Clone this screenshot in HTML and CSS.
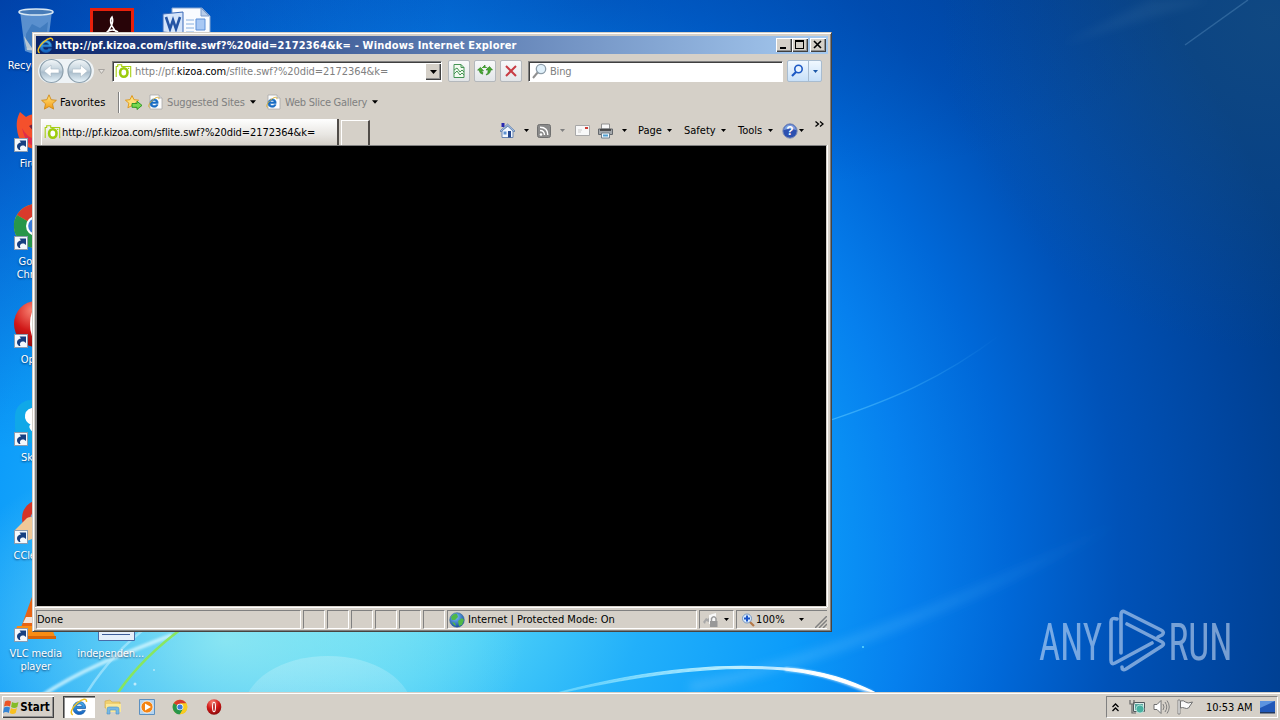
FILE: index.html
```html
<!DOCTYPE html>
<html lang="en">
<head>
    <meta charset="UTF-8">
    <meta name="viewport" content="width=device-width, initial-scale=1.0">
    <title>Desktop</title>
    <link rel="stylesheet" href="styles.css">
</head>
<body>
    <!-- Shared icons -->
    <svg class="defs" width="0" height="0">
        <defs>
            <linearGradient id="gold" x1="0" y1="0" x2="0" y2="1"><stop offset="0" stop-color="#ffe680"/><stop offset="1" stop-color="#f59a10"/></linearGradient>
            <linearGradient id="blueE" x1="0" y1="0" x2="0" y2="1"><stop offset="0" stop-color="#4cb4f0"/><stop offset="1" stop-color="#0f5fc0"/></linearGradient>
            <linearGradient id="orb" x1="0" y1="0" x2="0" y2="1"><stop offset="0" stop-color="#f4f8fa"/><stop offset=".45" stop-color="#c3d2dc"/><stop offset=".55" stop-color="#a9bccb"/><stop offset="1" stop-color="#eaf6fc"/></linearGradient>
            <radialGradient id="globe" cx=".4" cy=".3" r=".8"><stop offset="0" stop-color="#7cc4f8"/><stop offset="1" stop-color="#0a3c98"/></radialGradient>
            <radialGradient id="red" cx=".4" cy=".2" r=".9"><stop offset="0" stop-color="#f88070"/><stop offset=".5" stop-color="#d01818"/><stop offset="1" stop-color="#7c0808"/></radialGradient>
        </defs>
        <symbol id="shortcut" viewBox="0 0 14 14">
            <rect x=".5" y=".5" width="13" height="13" fill="#f4f8fc" stroke="#8c9cb0"/>
            <path d="M5 12C1.500 9 3 5 7 4.500L5.500 2.500h6.500v6.500L10 7.500C7 7 5 9 6.500 12z" fill="#173f80"/>
        </symbol>
        <symbol id="ie" viewBox="0 0 16 16">
            <path d="M13.800 9.300H5.600c.2 2 1.300 2.900 2.900 2.900 1.100 0 1.800-.4 2.300-1.200h2.800c-.8 2.400-2.600 3.600-5.200 3.600-3.500 0-5.700-2.300-5.700-5.600s2.300-5.700 5.700-5.700c3.600 0 5.600 2.400 5.400 6zM5.700 7.400h5.200c-.2-1.300-1.100-2.100-2.500-2.100s-2.400.8-2.700 2.100z" fill="url(#blueE)" stroke="#1b5ea8" stroke-width=".7"/>
            <path d="M2.500 15C-.5 13.500 1.800 8.500 6.500 4.500S15 0 14.700 3.500" fill="none" stroke="#f0c020" stroke-width="1.300"/>
        </symbol>
        <symbol id="iepage" viewBox="0 0 15 16">
            <path d="M2 1h9l3 3v11H2z" fill="#fdfdfd" stroke="#a8a8a8" stroke-width=".8"/>
            <path d="M11 1v3h3" fill="#ddd" stroke="#a8a8a8" stroke-width=".8"/>
            <g transform="translate(0 2.500) scale(.74)"><path d="M13.800 9.300H5.600c.2 2 1.300 2.900 2.900 2.900 1.100 0 1.800-.4 2.300-1.200h2.800c-.8 2.400-2.600 3.600-5.200 3.600-3.500 0-5.700-2.300-5.700-5.600s2.300-5.700 5.700-5.700c3.600 0 5.600 2.400 5.400 6zM5.700 7.400h5.200c-.2-1.300-1.100-2.100-2.500-2.100s-2.400.8-2.700 2.100z" fill="#186cc4" stroke="#186cc4" stroke-width=".8"/><path d="M2 15C-.5 13 2 8.500 6.500 4.500S15 0 14.700 3.500" fill="none" stroke="#dcb030" stroke-width="1.300"/></g>
        </symbol>
        <symbol id="kizoa" viewBox="0 0 16 16">
            <path d="M.7 14V3.500h1.500V1.700h4v1.800h9v10.700" fill="none" stroke="#a6cf12" stroke-width="1.100"/>
            <ellipse cx="8.300" cy="9.500" rx="3.700" ry="4.300" fill="#fff" stroke="#9ccc0c" stroke-width="2.600"/>
            <circle cx="13.100" cy="5.400" r=".7" fill="#a6cf12"/>
        </symbol>
        <symbol id="caret" viewBox="0 0 5 3"><path d="M0 0h5L2.500 3z" fill="currentColor"/></symbol>
        <symbol id="star" viewBox="0 0 16 16">
            <path d="M8 .8l2.200 4.900 5.200.6-3.900 3.500 1.100 5.300L8 12.500l-4.600 2.600 1.100-5.300L.6 6.300l5.200-.6z" fill="url(#gold)" stroke="#d08a18" stroke-width=".9"/>
        </symbol>
        <symbol id="chrome" viewBox="0 0 48 48">
            <circle cx="24" cy="24" r="22" fill="#e8c020"/>
            <path d="M24 24L4.900 13A22 22 0 0 1 43 13z" fill="#d83a2c"/>
            <path d="M24 24L4.900 13A22 22 0 0 0 24 46l9.500-17z" fill="#28964a"/>
            <path d="M24 13h19a22 22 0 0 1-19 33l9.500-17z" fill="#f8cc20"/>
            <circle cx="24" cy="24" r="10" fill="#fff"/><circle cx="24" cy="24" r="7.800" fill="#3a7cd8"/>
        </symbol>
        <symbol id="opera" viewBox="0 0 48 48">
            <ellipse cx="24" cy="24" rx="22" ry="23" fill="url(#red)"/>
            <ellipse cx="24" cy="24" rx="6" ry="16" fill="#fff"/>
            <ellipse cx="24" cy="24" rx="2.500" ry="13" fill="#b01414"/>
        </symbol>
    </svg>

    <main class="desktop">
        <svg class="wallpaper" viewBox="0 0 1280 720">
            <defs>
                <linearGradient id="fade" x1="0" y1="0" x2="0" y2="1"><stop offset="0" stop-color="#fff" stop-opacity=".22"/><stop offset="1" stop-color="#fff" stop-opacity="0"/></linearGradient>
                <linearGradient id="fade2" x1="0" x2="1"><stop offset="0" stop-color="#60c0ff" stop-opacity=".4"/><stop offset="1" stop-color="#60c0ff" stop-opacity="0"/></linearGradient>
                <linearGradient id="swoosh" x1="0" x2="1"><stop offset="0" stop-color="#7fe0ff" stop-opacity=".5"/><stop offset=".55" stop-color="#bff0ff"/><stop offset=".8" stop-color="#fff"/></linearGradient>
                <linearGradient id="line" x1="0" x2="1"><stop offset="0" stop-color="#5cc8ff" stop-opacity=".6"/><stop offset="1" stop-color="#5cc8ff" stop-opacity="0"/></linearGradient>
                <filter id="soft"><feGaussianBlur stdDeviation="1.200"/></filter>
                <filter id="softer"><feGaussianBlur stdDeviation="4"/></filter>
            </defs>
            <ellipse cx="328" cy="710" rx="84" ry="54" fill="url(#fade)"/>
            <path d="M40 697C80 670 120 655 172 635" stroke="#d8f8ff" stroke-width="4" fill="none" opacity=".75" filter="url(#soft)"/>
            <path d="M86 694C103 667 122 645 150 625" stroke="#b8ecff" stroke-width="2.500" fill="none" opacity=".6"/>
            <path d="M117 694C132 672 155 648 184 627" stroke="#8ce850" stroke-width="2.600" fill="none" opacity=".9"/>
            <circle cx="135" cy="684" r="1.500" fill="#fff" opacity=".6"/><circle cx="154" cy="670" r="1" fill="#fff" opacity=".5"/>
            <path d="M560 692C660 666 730 664 785 668C825 671 850 680 876 693C846 684 825 674 785 670C730 665 660 670 560 693z" fill="url(#swoosh)" stroke="url(#swoosh)" stroke-width="1.200"/>
            <path d="M785 669C825 673 846 682 872 693" stroke="#fff" stroke-width="4" fill="none" opacity=".7" filter="url(#soft)"/>
            <path d="M690 692C800 674 980 605 1110 530L1120 520C980 585 830 655 690 682z" fill="url(#fade2)" filter="url(#softer)"/>
            <path d="M831 420C890 400 940 380 1000 335" stroke="url(#line)" stroke-width="1.300" fill="none"/>
            <path d="M1185 45L1248 0" stroke="#8cc0e8" stroke-width="1.500" fill="none" opacity=".25"/>
            <path d="M1060 45L1150 0h60z" fill="#6c9cc0" opacity=".1" filter="url(#softer)"/>
            <circle cx="863" cy="647" r="1" fill="#60d8ff"/>
        </svg>

        <div class="icons">
            <div class="icon r1">
                <svg width="48" height="48" viewBox="0 0 48 48"><path d="M8 5l5 40q11 5 22 0l5-40z" fill="#78a8d8" opacity=".75"/><path d="M14 28l6-10 8 4 8-6-3 26H14z" fill="#2868b0" opacity=".5"/><path d="M12 30l8 12 12-4-2 7-15-1z" fill="#e8e4d8" opacity=".7"/><ellipse cx="24" cy="6" rx="17" ry="3" fill="#487cb8" stroke="#d8e8f4" stroke-width="1.500"/></svg>
                <span>Recycle Bin</span>
            </div>
            <div class="icon r2">
                <svg width="48" height="48" viewBox="0 0 48 48"><path d="M5 25C4 17 6 12 8 8l6 5C20 8 40 8 43 22c3 14-9 24-20 23S6 36 5 25z" fill="#f4502c"/><path d="M17 22l6-3v10z" fill="#702040"/><path d="M10 24q6 12 16 10v9q-12 0-16-19z" fill="#e02c48"/></svg>
                <svg class="arrow" width="14" height="14"><use href="#shortcut"/></svg>
                <span>Firefox</span>
            </div>
            <div class="icon r3">
                <svg width="48" height="48"><use href="#chrome"/></svg>
                <svg class="arrow" width="14" height="14"><use href="#shortcut"/></svg>
                <span>Google<br>Chrome</span>
            </div>
            <div class="icon r4">
                <svg width="48" height="48"><use href="#opera"/></svg>
                <svg class="arrow" width="14" height="14"><use href="#shortcut"/></svg>
                <span>Opera</span>
            </div>
            <div class="icon r5">
                <svg width="48" height="48" viewBox="0 0 48 48"><rect x="3" y="2" width="42" height="43" rx="16" fill="#10a8e8"/><path d="M24 13c-9 0-10 8-3 11 7 2 10 3 9 6-2 3-7 2-9-1" fill="none" stroke="#fff" stroke-width="7" stroke-linecap="round"/></svg>
                <svg class="arrow" width="14" height="14"><use href="#shortcut"/></svg>
                <span>Skype</span>
            </div>
            <div class="icon r6">
                <svg width="48" height="48" viewBox="0 0 48 48"><circle cx="28" cy="22" r="18" fill="#d43428"/><circle cx="29" cy="24" r="11" fill="#78a8d0"/><path d="M3 34l12-12q6-3 8 3l-3 18q-9 5-17-4z" fill="#f0c898"/></svg>
                <svg class="arrow" width="14" height="14"><use href="#shortcut"/></svg>
                <span>CCleaner</span>
            </div>
            <div class="icon r7">
                <svg width="48" height="48" viewBox="0 0 48 48"><path d="M20 3h8l13 36H7z" fill="#e86414"/><path d="M14 23h20l2 6H11z" fill="#f4e4d8"/><path d="M5 32h34l5 13H2z" fill="#f88c14"/><path d="M2 42h42v3H2z" fill="#d86408"/></svg>
                <svg class="arrow" width="14" height="14"><use href="#shortcut"/></svg>
                <span>VLC media<br>player</span>
            </div>
            <div class="icon r1 c2">
                <svg width="48" height="48" viewBox="0 0 48 48"><path d="M4.500 3.500h41v42h-41z" fill="#280408" stroke="#e8200c" stroke-width="3"/><path d="M18 28c6-5 9-12 7-17-4 4 1 13 7 17M20 26q5-4 11 0" fill="none" stroke="#fff" stroke-width="1.600"/></svg>
            </div>
            <div class="icon r7 c2">
                <svg width="48" height="48" viewBox="0 0 48 48"><path d="M11.500 2h36v44.500h-36z" fill="#e4eefa" stroke="#486ca8"/><path d="M15 40.500h28" stroke="#3c5c98" stroke-width="1"/></svg>
                <span>independen...</span>
            </div>
            <div class="icon r1 c3">
                <svg width="48" height="48" viewBox="0 0 48 48"><path d="M11 2h30l8 8v36H11z" fill="#f8fbff" stroke="#84a4d0"/><path d="M40 2v8h8z" fill="#b8cce8" stroke="#7c9ccc"/><path d="M25 14h8M25 18h8M25 22h8M25 26h8" stroke="#88b0e0"/><path d="M35 13h9v11h-9z" fill="#a8c8f4" stroke="#5c90d8"/><path d="M2 8l20-2v22L2 26z" fill="#d4e4fa" stroke="#3868b8"/><path d="M5 11l4 12 3-9 3 9 4-12" fill="none" stroke="#2454a4" stroke-width="2.600"/></svg>
            </div>
        </div>

        <svg class="brand" width="200" height="80" viewBox="0 0 200 80">
            <g class="brand-text">
                <text x="2" y="54.500" textLength="63" lengthAdjust="spacingAndGlyphs">ANY</text>
                <text x="131.500" y="54.500" textLength="64" lengthAdjust="spacingAndGlyphs">RUN</text>
            </g>
            <path class="brand-mark" d="M80 14q-6-2-6 3v38q0 5 4 3l37-20M84 48V10q0-5 4-3l36 18q4 2 1 5l-4 2M90 19l35 18q3 2 0 4L89 64q-4 2-4-2"/>
        </svg>

        <section class="window">
            <header class="titlebar">
                <svg width="17" height="17"><use href="#ie"/></svg>
                <h1>http://pf.kizoa.com/sflite.swf?%20did=2172364&amp;k= - Windows Internet Explorer</h1>
                <div class="controls">
                    <button><svg width="12" height="10"><path d="M2 7h6v2H2z"/></svg></button>
                    <button><svg width="12" height="10"><path d="M1 0h9v9H1zM2 2v6h7V2z" fill-rule="evenodd"/></svg></button>
                    <button class="close"><svg width="12" height="10"><path d="M2 1l7 7M9 1L2 8" stroke="#000" stroke-width="1.600"/></svg></button>
                </div>
            </header>

            <nav class="navbar">
                <svg class="orbs" width="72" height="28" viewBox="0 0 72 28">
                    <rect x="1" y="2" width="56" height="24" rx="12" fill="#eef3f6"/>
                    <circle cx="14.500" cy="14" r="11.500" fill="url(#orb)" stroke="#8c9fac" stroke-width="1.200"/>
                    <circle cx="42.500" cy="14" r="11.500" fill="url(#orb)" stroke="#8c9fac" stroke-width="1.200"/>
                    <path d="M7 14l7-6v4h8v4h-8v4zM50.500 14l-7-6v4h-8v4h8v4z" fill="#fff" stroke="#a9bac6" stroke-width=".6"/>
                    <path d="M61.500 12.500h6l-3 4z" fill="#e4e2de" stroke="#a8a4a0"/>
                </svg>
                <div class="field address">
                    <svg width="17" height="16"><use href="#kizoa"/></svg>
                    <span class="url">http://pf.<b>kizoa.com</b>/sflite.swf?%20did=2172364&amp;k=</span>
                    <button class="drop"><svg width="7" height="4"><path d="M0 0h7L3.500 4z"/></svg></button>
                </div>
                <button class="tool compat"><svg width="14" height="16" viewBox="0 0 14 16"><path d="M2 1.500h7l3 3V14.500H2z" fill="#f2faf0" stroke="#449454"/><path d="M9 1.500v3h3M2 7l3-2 3 4 2-2 2 2M2 11l3-3 3 4 2-2 2 2" fill="none" stroke="#449454"/></svg></button>
                <button class="tool"><svg width="16" height="16" viewBox="0 0 16 16"><path d="M3 4.500L.5 7.500h1.800q.2 3 3.700 3.500V9q-1.500-.5-1.500-1.500H6.500z" fill="#48a830" stroke="#28801c" stroke-width=".6" transform="rotate(8 4 8)"/><path d="M5 5l3-3v2l2.500 1M15.500 7l-3-3.500L9 7h2.200q.3 2.500-2.200 5 4.500-1 4.500-5z" fill="#48a830" stroke="#28801c" stroke-width=".6"/></svg></button>
                <button class="tool stop"><svg width="14" height="14" viewBox="0 0 14 14"><path d="M2 2l10 10M12 2L2 12" stroke="#c83c44" stroke-width="2"/></svg></button>
                <div class="field search">
                    <svg width="17" height="17" viewBox="0 0 17 17"><path d="M2 15l5-6" stroke="#909090" stroke-width="2"/><circle cx="10" cy="6" r="4.700" fill="#e0f0fa" stroke="#8c9ca8" stroke-width="1.300"/></svg>
                    <span>Bing</span>
                </div>
                <button class="find">
                    <svg width="20" height="20" viewBox="0 0 20 20"><path d="M4 15l4-4" stroke="#1c58c4" stroke-width="2.200"/><circle cx="10.500" cy="8" r="3.700" fill="#e8f4ff" stroke="#1c58c4" stroke-width="1.600"/></svg>
                    <i><svg width="5" height="3"><use href="#caret"/></svg></i>
                </button>
            </nav>

            <div class="favbar">
                <svg width="16" height="16"><use href="#star"/></svg>
                <span class="fav-title">Favorites</span>
                <i class="sep"></i>
                <svg class="add" width="18" height="17" viewBox="0 0 18 17"><path d="M7 1.500l2 4.200 4.600.5-3.500 3 1 4.600L7 11.500l-4.100 2.300 1-4.600-3.500-3 4.600-.5z" fill="#ffe078" stroke="#e09a20"/><path d="M7 9.500h5V7.300l5 4.100-5 4.100v-2.200H7z" fill="#78d850" stroke="#259420" stroke-width=".9"/></svg>
                <svg class="page-ico" width="15" height="16"><use href="#iepage"/></svg>
                <span class="sites">Suggested Sites</span>
                <svg class="car" width="6" height="4"><use href="#caret"/></svg>
                <svg class="page-ico second" width="15" height="16"><use href="#iepage"/></svg>
                <span class="slice">Web Slice Gallery</span>
                <svg class="car" width="6" height="4"><use href="#caret"/></svg>
            </div>

            <div class="tabbar">
                <div class="tab">
                    <svg width="17" height="16"><use href="#kizoa"/></svg>
                    <span class="url">http://pf.kizoa.com/sflite.swf?%20did=2172364&amp;k=</span>
                </div>
                <div class="newtab"></div>
                <div class="commands">
                    <svg width="17" height="17" viewBox="0 0 17 17"><path d="M2.500 1h3v4h-3z" fill="#2828b0"/><path d="M3 8.500v7h11v-7L9 4z" fill="#f2f8ff" stroke="#6884b0"/><path d="M1 9l7.500-7L16 9l-1 1-6.500-6L2 10z" fill="#a8c4e8" stroke="#5474a4" stroke-width=".7"/><path d="M9 9h3v6.500H9z" fill="#244890"/><path d="M4.500 9.500h3v3h-3z" fill="#5c90d0"/></svg>
                    <svg class="car c1" width="5" height="3"><use href="#caret"/></svg>
                    <svg class="rss" width="14" height="14" viewBox="0 0 14 14"><rect x=".5" y=".5" width="13" height="13" rx="2" fill="#8a8a8a" stroke="#707070"/><circle cx="4" cy="10.500" r="1.300" fill="#fff"/><path d="M3 6.500Q7.500 6.500 7.500 11M3 3.200Q10.800 3.200 10.800 11" fill="none" stroke="#fff" stroke-width="1.400"/></svg>
                    <svg class="car c2 dim" width="5" height="3"><use href="#caret"/></svg>
                    <svg class="mail" width="15" height="11" viewBox="0 0 15 11"><path d="M.5.5h14v10H.5z" fill="#f8f8f8" stroke="#a8a8a8"/><path d="M3 5h4M3 7h3" stroke="#ccc"/><path d="M10 2h3v2h-3z" fill="#d03c34"/></svg>
                    <svg class="printer" width="17" height="16" viewBox="0 0 17 16"><path d="M4.500 1h8v5h-8z" fill="#f8f8f8" stroke="#909090"/><path d="M1.500 6h14v5.500h-14z" fill="#a4a8ac" stroke="#64686c"/><path d="M3 7h11" stroke="#303030" stroke-width="1.500"/><path d="M4.500 10h8v5h-8z" fill="#f0f8ff" stroke="#70808c"/><path d="M6 12.500h5" stroke="#50a0d0" stroke-width="2"/></svg>
                    <svg class="car c3" width="5" height="3"><use href="#caret"/></svg>
                    <span class="cmd-page">Page</span><svg class="car c4" width="5" height="3"><use href="#caret"/></svg>
                    <span class="cmd-safety">Safety</span><svg class="car c4" width="5" height="3"><use href="#caret"/></svg>
                    <span class="cmd-tools">Tools</span><svg class="car c6" width="5" height="3"><use href="#caret"/></svg>
                    <svg class="help" width="16" height="16" viewBox="0 0 16 16"><circle cx="8" cy="8" r="7.200" fill="#2c50b0" stroke="#8090b8"/><path d="M2 7a6 5.500 0 0 1 12 0q-6-2-12 0z" fill="#7c9cdc"/><text x="8" y="12.300" text-anchor="middle">?</text></svg>
                    <svg class="car c5" width="5" height="3"><use href="#caret"/></svg>
                    <svg class="more" width="9" height="7" viewBox="0 0 9 7"><path d="M.5.500l3 2.500-3 2.500M5 .5L8 3 5 5.500" fill="none" stroke="#000" stroke-width="1.300"/></svg>
                </div>
            </div>

            <div class="content"></div>

            <footer class="status">
                <div class="pane done">Done</div>
                <div class="pane"></div><div class="pane"></div><div class="pane"></div>
                <div class="pane"></div><div class="pane"></div><div class="pane"></div>
                <div class="pane zone">
                    <svg width="16" height="16" viewBox="0 0 16 16"><circle cx="8" cy="8" r="7.300" fill="url(#globe)" stroke="#3c6c94" stroke-width=".6"/><path d="M2 5q3-4 6-3l1 3-3 3-3 0zM9 9l4-3 2 2-2 5-3 1zM3 10l3 1 1 3-2-1z" fill="#50b848"/></svg>
                    <span>Internet | Protected Mode: On</span>
                </div>
                <div class="pane lock">
                    <svg width="18" height="16" viewBox="0 0 18 16"><path d="M1 10l3-4 2 1 3-5v4l-2 4-3-1-1 3z" fill="#a8a8a8"/><path d="M7 3l7-2v11H7z" fill="#f8f8f8"/><path d="M9.500 9V6.500q2.500-3.500 4.500 0V9" fill="none" stroke="#9a9a9a" stroke-width="1.500"/><path d="M8 9h7.500v6H8z" fill="#989898"/></svg>
                    <svg class="car" width="5" height="3"><use href="#caret"/></svg>
                </div>
                <div class="pane zoom">
                    <svg width="14" height="14" viewBox="0 0 14 14"><path d="M8 8l5 5" stroke="#b47848" stroke-width="2.200"/><circle cx="6" cy="5.500" r="4.500" fill="#d8ecff" stroke="#7898c0"/><path d="M3 5.500h6M6 2.500v6" stroke="#1c54c8" stroke-width="2"/></svg>
                    <span>100%</span>
                    <svg class="car" width="5" height="3"><use href="#caret"/></svg>
                    <svg class="grip" width="12" height="12" viewBox="0 0 12 12"><path d="M0 12L12 0M4 12l8-8M8 12l4-4" stroke="#808080" stroke-width="1.500"/></svg>
                </div>
            </footer>
        </section>
    </main>

    <footer class="taskbar">
        <button class="start">
            <svg width="17" height="16" viewBox="0 0 17 16"><path d="M2 2.500q3-2 6 0L7 7.500q-3-1.500-6 0z" fill="#ec5424"/><path d="M9 3q3 2 6.500 0L14.300 8q-3 2-6.200 0z" fill="#84bc28"/><path d="M1 8.500q3-1.500 6 0L5.800 14Q3 12 0 14z" fill="#3484d4"/><path d="M8 9q3 2 6 0l-1.300 5q-3 2-6 0z" fill="#f8c020"/></svg>
            Start
        </button>
        <div class="task active"><svg width="18" height="18"><use href="#ie"/></svg></div>
        <svg class="quick" width="18" height="18" viewBox="0 0 18 18"><path d="M1 3l5-1 2 2h8v6H1z" fill="#f0d070" stroke="#d0a848" stroke-width=".6"/><path d="M2 6h15v8H2z" fill="#fbe898"/><path d="M3 16v-5q0-2 2-2h8q2 0 2 2v5h-3v-4H6v4z" fill="#78b8e4" stroke="#4c90c8" stroke-width=".6"/></svg>
        <svg class="quick" width="18" height="18" viewBox="0 0 18 18"><path d="M1.500 1.500h15v15h-15z" fill="#b4d4f0" stroke="#5c90c0"/><circle cx="9" cy="9" r="6" fill="#f48414" stroke="#fff" stroke-width=".7"/><path d="M7 5.500l6 3.500-6 3.500z" fill="#fff"/></svg>
        <svg class="quick" width="16" height="16"><use href="#chrome"/></svg>
        <svg class="quick last" width="16" height="16"><use href="#opera"/></svg>
        <div class="tray">
            <svg class="chev" width="7" height="9" viewBox="0 0 7 9"><path d="M.5 4l3-3 3 3M.5 8l3-3 3 3" fill="none" stroke="#000" stroke-width="1.300"/></svg>
            <svg class="net" width="17" height="16" viewBox="0 0 17 16"><path d="M4.500 3.500h11v9h-11z" fill="#dcece8" stroke="#50585c"/><path d="M6 5h8v6H6z" fill="#58a8a0"/><circle cx="11" cy="10" r="4" fill="#48b0a0" stroke="#e8f8f4" stroke-width=".6"/><path d="M1 1v4h4V1M3 5v9h4" fill="none" stroke="#686868" stroke-width="1.200"/></svg>
            <svg class="vol" width="17" height="16" viewBox="0 0 17 16"><path d="M1 5.500h3l4-4v13l-4-4H1z" fill="#fff" stroke="#707070"/><path d="M10 5q2 3 0 6M12 3q3.500 5 0 10M14 1.500q4.500 6.500 0 13" fill="none" stroke="#808080"/></svg>
            <svg class="flag" width="17" height="16" viewBox="0 0 17 16"><path d="M1 1h2v14H1z" fill="#fff" stroke="#707070" stroke-width=".8"/><path d="M3.500 2q3-1 5 1t7 0q-2 3-4 6-2 1-4 0t-4 0z" fill="#fafafa" stroke="#707070"/></svg>
            <time>10:53 AM</time>
            <svg class="show" width="15" height="13" viewBox="0 0 15 13"><path d="M0 0h15v11H0z" fill="#2058b8"/><path d="M0 0h15L0 7z" fill="#5c94e0"/><path d="M0 11h15v1.500H0z" fill="#203860"/></svg>
        </div>
    </footer>
</body>
</html>
```
FILE: styles.css
```css
* {
    margin: 0;
    padding: 0;
    box-sizing: border-box;
}

body {
    width: 1280px;
    height: 720px;
    overflow: hidden;
    display: flex;
    flex-direction: column;
    font-family: Tahoma, "DejaVu Sans Condensed", "DejaVu Sans", sans-serif;
    font-stretch: condensed;
    font-size: 11px;
    color: #000;
}

svg {
    display: block;
    flex: none;
}

span, h1, time {
    white-space: nowrap;
}

button {
    font: inherit;
    border: none;
    display: flex;
    align-items: center;
    justify-content: center;
}

.defs {
    position: absolute;
}

/* Desktop */
.desktop {
    position: relative;
    height: 692px;
    overflow: hidden;
    background:
        radial-gradient(circle 330px at 1270px 20px, rgba(40, 90, 120, 0.4), transparent),
        radial-gradient(ellipse 300px 200px at 225px 640px, rgba(170, 244, 240, 0.7), transparent),
        radial-gradient(circle 450px at 0 0, rgba(0, 40, 140, 0.5), transparent),
        radial-gradient(ellipse 600px 200px at 600px 0, rgba(0, 50, 140, 0.35), transparent),
        radial-gradient(circle 960px at 390px 560px, #70e0f4 0, #4cd0f8 120px, #22b0fa 260px, #0c9cfa 410px, #0680ee 520px, #0068d8 620px, #0052b8 730px, #00449c 860px, #003c88 950px);
}

.wallpaper {
    position: absolute;
    left: 0;
    top: 0;
    width: 1280px;
    height: 720px;
}

.icons {
    position: absolute;
    left: -2px;
    top: 6px;
    display: grid;
    grid-template-columns: repeat(3, 75.5px);
    grid-template-rows: repeat(7, 98px);
}

.icon {
    position: relative;
    grid-column: 1;
    display: flex;
    flex-direction: column;
    align-items: center;
    gap: 5px;
    color: #fff;
    line-height: 13px;
    letter-spacing: -0.1px;
    text-align: center;
    text-shadow: 0 1px 2px rgba(0, 20, 60, 0.7);
}

.icon svg {
    overflow: visible;
}

.icon .arrow {
    position: absolute;
    left: 16px;
    top: 34px;
}

.r1 { grid-row: 1; }
.r2 { grid-row: 2; }
.r3 { grid-row: 3; }
.r4 { grid-row: 4; }
.r5 { grid-row: 5; }
.r6 { grid-row: 6; }
.r7 { grid-row: 7; }
.c2 { grid-column: 2; }
.c3 { grid-column: 3; }

.brand {
    position: absolute;
    left: 1037px;
    top: 605px;
    overflow: visible;
    opacity: 0.52;
}

.brand-text {
    font-family: Roboto, "Open Sans", sans-serif;
    font-size: 51px;
    font-weight: 400;
    fill: #e4f0ff;
}

.brand-mark {
    fill: none;
    stroke: #e4f0ff;
    stroke-width: 3.6;
    stroke-linejoin: round;
    stroke-linecap: round;
}

/* Browser window */
.window {
    position: absolute;
    left: 32px;
    top: 32px;
    width: 800px;
    height: 600px;
    padding: 2px;
    display: flex;
    flex-direction: column;
    background: #d5d0c8;
    border: 1px solid;
    border-color: #d5d0c8 #484440 #484440 #d5d0c8;
    box-shadow: inset 1px 1px #fff, inset -1px -1px #808080;
}

.titlebar {
    height: 18px;
    margin: 1px 1px 0;
    display: flex;
    align-items: center;
    background: linear-gradient(90deg, #0a246a, #a6caf0);
}

.titlebar svg {
    margin-left: 1px;
}

.titlebar h1 {
    margin-left: 1px;
    font-size: 11px;
    font-weight: bold;
    letter-spacing: 0.18px;
    color: #fff;
}

.controls {
    margin-left: auto;
    padding-right: 2px;
    display: flex;
}

.controls button {
    width: 16px;
    height: 14px;
    background: #d5d0c8;
    box-shadow: inset 1px 1px #fff, inset -1px -1px #404040, inset -2px -2px #909090;
}

.controls svg {
    margin: 0;
}

.controls .close {
    margin-left: 2px;
}

.navbar {
    height: 34px;
    padding-left: 2px;
    display: flex;
    align-items: center;
}

.orbs {
    margin-right: 3px;
}

.field {
    height: 21px;
    display: flex;
    align-items: center;
    background: #fff;
    color: #808080;
    border: 1px solid;
    border-color: #808080 #fff #fff #808080;
    box-shadow: inset 1px 1px #404040;
}

.url {
    letter-spacing: -0.07px;
}

.address {
    width: 330px;
    padding-left: 2px;
}

.address .url {
    margin-left: 3px;
}

.address b {
    font-weight: normal;
    color: #000;
}

.drop {
    width: 16px;
    height: 17px;
    margin: 1px 0 0 auto;
    background: #d5d0c8;
    box-shadow: inset 1px 1px #fff, inset -1px -1px #404040, inset -2px -2px #909090;
}

.tool {
    width: 22px;
    height: 22px;
    margin-left: 4px;
    border: 1px solid #b4b8bc;
    border-radius: 2px;
    background: linear-gradient(#f8f9fa, #e2e5e8);
}

.compat {
    margin-left: 6px;
}

.search {
    width: 255px;
    margin-left: 6px;
    padding-left: 2px;
}

.search span {
    margin-left: 2px;
    letter-spacing: -0.2px;
}

.find {
    width: 35px;
    height: 22px;
    margin-left: 4px;
    justify-content: flex-start;
    color: #1c58a8;
    border: 1px solid #a8bcd0;
    border-radius: 2px;
    background: linear-gradient(#f0f8ff, #c8e0f8);
}

.find i {
    flex: 1;
    height: 20px;
    display: flex;
    align-items: center;
    justify-content: center;
    border-left: 1px solid #a8bcd0;
}

.favbar {
    height: 30px;
    padding: 0 0 2px 6px;
    display: flex;
    align-items: center;
}

.fav-title {
    width: 58px;
    margin-left: 3px;
    letter-spacing: 0.1px;
}

.sep {
    width: 2px;
    height: 21px;
    margin-right: 5px;
    background: #808080;
    border-right: 1px solid #fff;
}

.page-ico {
    margin-left: 5px;
}

.second {
    margin-left: 10px;
}

.sites, .slice {
    margin-left: 4px;
    color: #808080;
    letter-spacing: -0.15px;
}

.sites {
    width: 83px;
}

.slice {
    width: 87px;
    letter-spacing: -0.25px;
}

.tabbar {
    height: 27px;
    padding-left: 6px;
    display: flex;
    align-items: flex-end;
}

.tab {
    width: 298px;
    height: 26px;
    padding-left: 2px;
    display: flex;
    align-items: center;
    background: linear-gradient(#fff, #e8e6e2 60%, #d5d0c8);
    border-left: 1px solid #fff;
    border-right: 2px solid #504c48;
}

.tab .url {
    margin-left: 1px;
}

.newtab {
    width: 29px;
    height: 25px;
    margin-left: 2px;
    border: 1px solid #fff;
    border-right: 2px solid #504c48;
    border-bottom: none;
}

.commands {
    height: 29px;
    margin-left: 129px;
    display: flex;
    align-items: center;
}

.c1 { margin: 0 8px 0 8px; }
.c2 { margin: 0 10px 0 9px; }
.c3 { margin: 0 11px 0 8px; }
.c4 { margin: 0 12px 0 3px; }
.c5 { margin-left: 1px; }
.c6 { margin: 0 9px 0 3px; }

.printer {
    margin-left: 7px;
}

.dim {
    color: #808080;
}

.cmd-page { width: 26px; }
.cmd-safety { width: 34px; }
.cmd-tools { width: 27px; }

.help text {
    font-family: "Liberation Sans", sans-serif;
    font-size: 12px;
    font-weight: bold;
    fill: #fff;
}

.more {
    margin: 0 0 12px 11px;
}

.content {
    height: 462px;
    margin-right: 2px;
    background: #000;
    border: 1px solid;
    border-color: #808080 #d5d0c8 #d5d0c8 #808080;
    border-left-width: 2px;
    box-shadow: 0 1px #fff, 1px 0 #fff;
}

.status {
    height: 19px;
    margin-top: 3px;
    padding-left: 1px;
    display: flex;
    gap: 2px;
}

.pane {
    width: 22px;
    height: 19px;
    display: flex;
    align-items: center;
    border: 1px solid;
    border-color: #808080 #fff #fff #808080;
}

.done { width: 265px; }

.zone {
    width: 250px;
    padding-left: 1px;
}

.zone span {
    margin-left: 3px;
}

.lock {
    width: 35px;
    padding-left: 2px;
}

.lock .car {
    margin-left: 4px;
}

.zoom {
    width: 91px;
    padding-left: 4px;
    border-right: none;
}

.zoom span {
    width: 47px;
    margin-left: 1px;
    letter-spacing: 0.1px;
}

.grip {
    margin: 5px 0 0 11px;
}

/* Taskbar */
.taskbar {
    height: 28px;
    padding: 2px 2px 1px;
    display: flex;
    align-items: center;
    background: #d5d0c8;
    border-top: 1px solid #d5d0c8;
    box-shadow: inset 0 1px #fff;
}

.start {
    width: 52px;
    height: 22px;
    padding-right: 3px;
    font-weight: bold;
    font-size: 11.5px;
    background: #d5d0c8;
    box-shadow: inset 1px 1px #fff, inset -1px -1px #404040, inset -2px -2px #909090;
}

.task {
    width: 32px;
    height: 22px;
    margin: 0 1px 0 9px;
    display: flex;
    align-items: center;
    justify-content: center;
    background: #fff;
    box-shadow: inset 1px 1px #404040, inset 2px 2px #909090;
}

.quick {
    margin: 0 8px;
}

.last {
    margin-left: 10px;
}

.tray {
    width: 172px;
    height: 22px;
    margin-left: auto;
    padding-left: 5px;
    display: flex;
    align-items: center;
    border: 1px solid;
    border-color: #808080 #fff #fff #808080;
}

.net { margin-left: 10px; }
.vol { margin-left: 7px; }
.flag { margin-left: 7px; }

.tray time {
    width: 47px;
    margin-left: 12px;
    letter-spacing: -0.05px;
}

.show {
    margin-left: 7px;
}
```
